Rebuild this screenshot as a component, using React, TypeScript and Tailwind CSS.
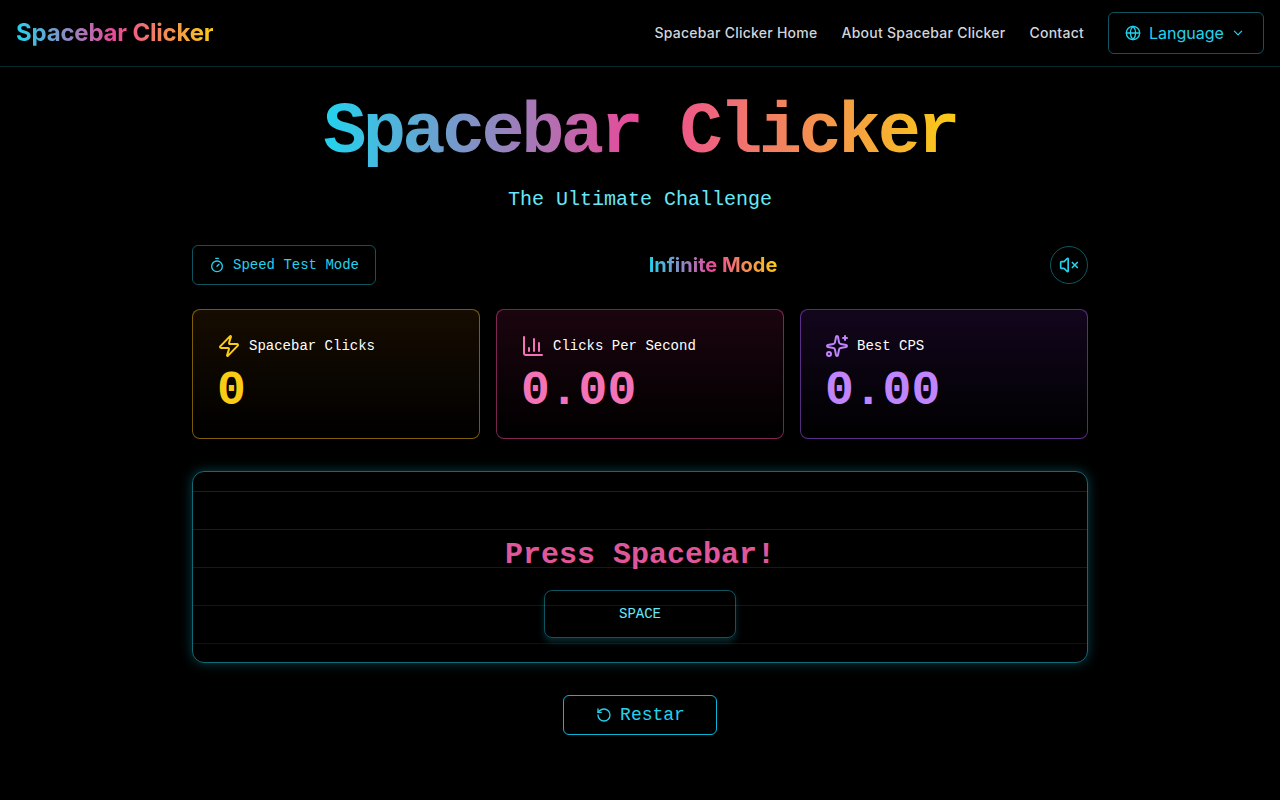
import React from "react";
import { Timer, Zap, ChartColumn, Sparkles, VolumeX, RotateCcw, Globe, ChevronDown } from "lucide-react";

const grad = "bg-[linear-gradient(to_right,#22d3ee,#ec4899,#facc15)] bg-clip-text text-transparent";
const mono = "font-['Liberation_Mono',monospace]";

function Stat({ icon, label, value, cls, num }: { icon: React.ReactNode; label: string; value: string; cls: string; num: string }) {
  return (
    <div className={`rounded-lg border p-6 h-[130px] ${cls}`}>
      <div className="flex items-center gap-2 h-6">
        {icon}
        <span className="text-sm text-white">{label}</span>
      </div>
      <div className={`text-5xl font-bold leading-none mt-[9px] ${num}`}>{value}</div>
    </div>
  );
}

export default function App() {
  return (
    <div className={`min-h-[800px] bg-black ${mono}`}>
      <header className="h-[67px] border-b border-[#22d3ee]/20 flex items-center justify-between px-4 font-['Inter',sans-serif]">
        <div className={`text-2xl font-bold tracking-[-0.2px] ${grad}`}>Spacebar Clicker</div>
        <nav className="flex items-center gap-6">
          <a className="text-sm font-medium tracking-[0.25px] text-gray-300">Spacebar Clicker Home</a>
          <a className="text-sm font-medium tracking-[0.25px] text-gray-300">About Spacebar Clicker</a>
          <a className="text-sm font-medium tracking-[0.25px] text-gray-300">Contact</a>
          <button className="w-[156px] h-[42px] rounded-md border border-[#22d3ee]/40 flex items-center gap-2 pl-4 text-base text-[#22d3ee]">
            <Globe size={16} />
            <span>Language</span>
            <ChevronDown size={16} className="ml-[-2px] scale-90" />
          </button>
        </nav>
      </header>
      <main className="w-[896px] mx-auto">
        <div className="flex justify-center mt-[30px]">
          <h1 className={`text-7xl font-bold tracking-tighter leading-[72px] ${grad}`}>Spacebar Clicker</h1>
        </div>
        <p className="text-xl text-center text-[#67e8f9] mt-[17px] leading-7">The Ultimate Challenge</p>
        <div className="flex items-center justify-between mt-[31px] h-10">
          <button className="w-[184px] h-10 rounded-md border border-[#22d3ee]/40 flex items-center justify-center gap-2 text-sm text-[#22d3ee]">
            <Timer size={16} />
            Speed Test Mode
          </button>
          <div className={`text-xl font-bold font-['Inter',sans-serif] ${grad}`}>Infinite Mode</div>
          <button className="size-[38px] rounded-full border border-[#22d3ee]/40 flex items-center justify-center text-[#22d3ee]">
            <VolumeX size={20} />
          </button>
        </div>
        <div className="grid grid-cols-3 gap-4 mt-6">
          <Stat icon={<Zap size={24} className="text-[#facc15]" />} label="Spacebar Clicks" value="0" cls="border-[#eab308]/50 bg-[linear-gradient(to_bottom,rgba(217,119,6,0.1),transparent)]" num="text-[#facc15]" />
          <Stat icon={<ChartColumn size={24} className="text-[#f472b6]" />} label="Clicks Per Second" value="0.00" cls="border-[#ec4899]/50 bg-[linear-gradient(to_bottom,rgba(219,39,119,0.12),transparent)]" num="text-[#f472b6]" />
          <Stat icon={<Sparkles size={24} className="text-[#c084fc]" />} label="Best CPS" value="0.00" cls="border-[#a855f7]/50 bg-[linear-gradient(to_bottom,rgba(147,51,234,0.12),transparent)]" num="text-[#c084fc]" />
        </div>
        <div className="relative mt-8 h-[192px] rounded-xl border border-[#22d3ee]/50 shadow-[0_0_12px_rgba(34,211,238,0.3)] overflow-hidden flex flex-col items-center">
          <div className="absolute inset-0 [mask-image:linear-gradient(to_bottom,black,rgba(0,0,0,0.5))] bg-[linear-gradient(to_bottom,rgba(34,211,238,0.2)_1px,transparent_1px)] bg-[size:100%_38px] bg-[position:0_19px]" />
          <div className="relative text-3xl font-bold text-[#e0569b] mt-[65px] leading-9">Press Spacebar!</div>
          <div className="relative mt-[17px] w-[192px] h-12 rounded-lg border border-[#22d3ee]/40 shadow-[0_4px_6px_rgba(34,211,238,0.2)] flex items-center justify-center text-sm text-[#67e8f9]">SPACE</div>
        </div>
        <div className="flex justify-center mt-8">
          <button className="w-[154px] h-10 rounded-md border border-[#06b6d4] flex items-center justify-center gap-2 pl-px text-lg text-[#22d3ee]">
            <RotateCcw size={16} />
            Restar
          </button>
        </div>
      </main>
    </div>
  );
}
